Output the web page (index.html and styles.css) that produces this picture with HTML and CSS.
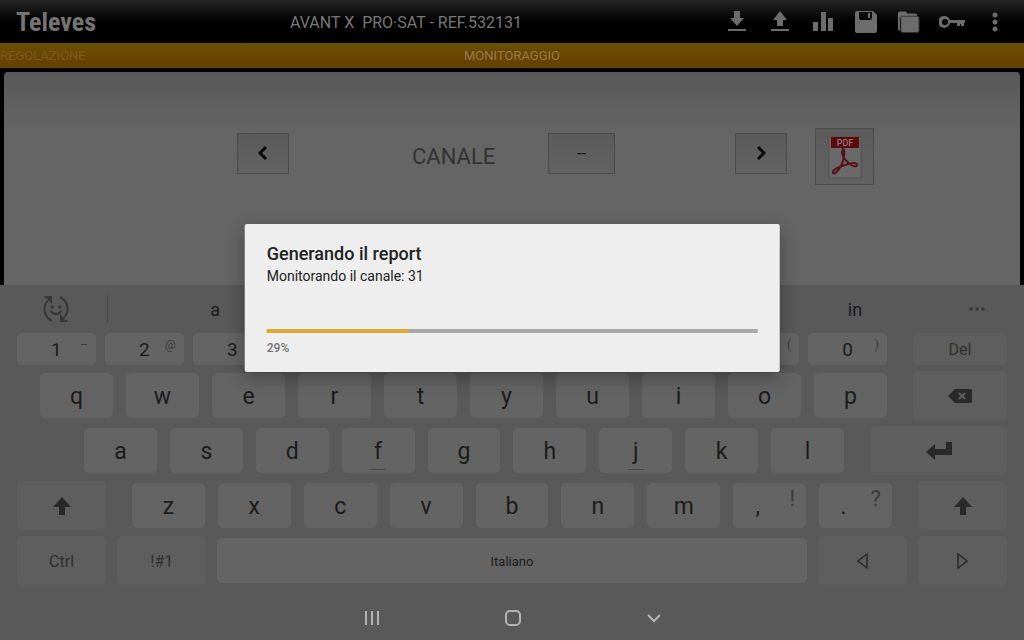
FILE: index.html
```html
<!DOCTYPE html>
<html lang="it">
<head>
<meta charset="utf-8">
<title>Televes - Monitoraggio</title>
<link rel="stylesheet" href="styles.css">
</head>
<body>
<div class="app">
  <header class="topbar">
    <div class="logo">Televes</div>
    <h1 class="device">AVANT X&nbsp; PRO·SAT - REF.532131</h1>
    <div class="actions">
      <button class="icon-btn" aria-label="Download"><svg width="18" height="22" viewBox="0 0 18 22"><path d="M6 0h6v7h4l-7 8-7-8h4zM0 18h18v2H0z"/></svg></button>
      <button class="icon-btn" aria-label="Upload"><svg width="18" height="22" viewBox="0 0 18 22"><path d="M6 15h6V9h4L9 0 2 9h4zM0 18h18v2H0z"/></svg></button>
      <button class="icon-btn" aria-label="Grafico"><svg width="20" height="22" viewBox="0 0 20 22"><path d="M0 11h5v9H0zM8 1h5v19H8zM15 7h5v13h-5z"/></svg></button>
      <button class="icon-btn" aria-label="Salva"><svg width="22" height="22" viewBox="0 0 22 22"><path fill-rule="evenodd" d="M2 0h16l4 4v16a2 2 0 0 1-2 2H2a2 2 0 0 1-2-2V2a2 2 0 0 1 2-2zM4 1v6q0 2 2 2h9q2 0 2-2V1zM13 2h2v5h-2z"/></svg></button>
      <button class="icon-btn" aria-label="Cartella"><svg width="23" height="22" viewBox="0 0 24 22"><path d="M1 18V2q0-2 2-2h6l2 2h8q2 0 2 2v2H3v14q-2 0-2-2z"/><path d="M4 6q0-1 1-1h16q2 0 2 2v13q0 2-2 2H6q-2 0-2-2z"/></svg></button>
      <button class="icon-btn" aria-label="Chiave"><svg width="26" height="22" viewBox="0 0 26 22"><path fill-rule="evenodd" d="M6 5a6 6 0 0 1 5 4h15v3h-1v3h-3v-2h-1v2h-3v-3h-7A6 6 0 1 1 6 5zM6 8a3 3 0 1 0 0 6 3 3 0 0 0 0-6z"/></svg></button>
      <button class="icon-btn" aria-label="Altro"><svg width="6" height="22" viewBox="0 0 6 22"><circle cx="3" cy="4" r="2.500"/><circle cx="3" cy="11" r="2.500"/><circle cx="3" cy="18" r="2.500"/></svg></button>
    </div>
  </header>

  <nav class="tabs">
    <a class="tab" href="#regolazione">REGOLAZIONE</a>
    <a class="tab active" href="#monitoraggio">MONITORAGGIO</a>
  </nav>

  <main class="stage">
    <section class="panel">
      <button class="box prev" aria-label="Canale precedente"><svg width="10" height="16" viewBox="0 0 10 16"><path d="M8 2 2 8l6 6"/></svg></button>
      <span class="label">CANALE</span>
      <button class="box value">--</button>
      <button class="box next" aria-label="Canale successivo"><svg width="10" height="16" viewBox="0 0 10 16"><path d="m2 2 6 6-6 6"/></svg></button>
      <button class="box pdf" aria-label="Report PDF">
        <svg width="34" height="44" viewBox="0 0 34 44">
          <rect class="sheet" x="1" y="2" width="32" height="41"/>
          <rect class="band" x="3" y="2" width="28" height="11"/>
          <text class="band-text" x="17" y="11" text-anchor="middle">PDF</text>
          <path class="swirl" d="M15 14c2 0 2 6-1 15-3 6-7 11-9 9-1-3 5-6 12-8 6-2 12-3 12 0 0 2-4 2-7-1-4-3-8-8-8-12z"/>
        </svg>
      </button>
    </section>
  </main>

  <section class="keyboard" aria-label="Tastiera">
    <div class="suggest">
      <button class="plain emoji" aria-label="Emoji">
        <svg width="28" height="28" viewBox="0 0 28 28"><path class="ring" d="M10 26C2 22 1 13 4 8l4-5M18 2c8 4 9 13 6 18l-4 5"/><path d="M2 1h8v8L8 7 7 4 3 3zM26 27h-8v-8l2 2 1 3 4 1z"/><path class="smile" d="M9 16c2 4 8 4 10 0"/><circle cx="10" cy="12" r="1.500"/><circle cx="18" cy="12" r="1.500"/></svg>
      </button>
      <button class="plain word">a</button>
      <button class="plain word last">in</button>
      <button class="plain more" aria-label="Altro"><svg width="16" height="4" viewBox="0 0 16 4"><circle cx="2" cy="2" r="1.700"/><circle cx="8" cy="2" r="1.700"/><circle cx="14" cy="2" r="1.700"/></svg></button>
    </div>

    <div class="row digits">
      <div class="keys"><button class="key">1<sup>–</sup></button><button class="key">2<sup>@</sup></button><button class="key">3</button><button class="key">4</button><button class="key">5</button><button class="key">6</button><button class="key">7</button><button class="key">8</button><button class="key">9<sup>(</sup></button><button class="key">0<sup>)</sup></button></div>
      <button class="fn">Del</button>
    </div>
    <div class="row top">
      <div class="keys"><button class="key">q</button><button class="key">w</button><button class="key">e</button><button class="key">r</button><button class="key">t</button><button class="key">y</button><button class="key">u</button><button class="key">i</button><button class="key">o</button><button class="key">p</button></div>
      <button class="fn" aria-label="Cancella"><svg width="24" height="16" viewBox="0 0 24 16"><path d="M7 1h15q2 0 2 2v10q0 2-2 2H7L0 8z"/><path class="cross" d="m11 5 6 6m0-6-6 6"/></svg></button>
    </div>
    <div class="row home">
      <div class="keys"><button class="key">a</button><button class="key">s</button><button class="key">d</button><button class="key bump">f</button><button class="key">g</button><button class="key">h</button><button class="key bump">j</button><button class="key">k</button><button class="key">l</button></div>
      <button class="fn" aria-label="Invio"><svg width="28" height="20" viewBox="0 0 28 20"><path d="m1 11 9-8v5h11V1h6v13H10v5z"/></svg></button>
    </div>
    <div class="row bottom">
      <button class="fn" aria-label="Maiuscole"><svg width="20" height="20" viewBox="0 0 20 20"><path d="m10 1 9 10h-6v8H7v-8H1z"/></svg></button>
      <div class="keys"><button class="key">z</button><button class="key">x</button><button class="key">c</button><button class="key">v</button><button class="key">b</button><button class="key">n</button><button class="key">m</button><button class="key punct">,<sup>!</sup></button><button class="key punct">.<sup>?</sup></button></div>
      <button class="fn" aria-label="Maiuscole"><svg width="20" height="20" viewBox="0 0 20 20"><path d="m10 1 9 10h-6v8H7v-8H1z"/></svg></button>
    </div>
    <div class="row space">
      <button class="fn">Ctrl</button>
      <button class="fn">!#1</button>
      <button class="key bar">Italiano</button>
      <button class="fn" aria-label="Sinistra"><svg class="arrow" width="12" height="18" viewBox="0 0 12 18"><path d="M11 2v14L2 9z"/></svg></button>
      <button class="fn" aria-label="Destra"><svg class="arrow" width="12" height="18" viewBox="0 0 12 18"><path d="M2 2v14l9-7z"/></svg></button>
    </div>

    <div class="system">
      <button class="plain" aria-label="Recenti"><svg width="16" height="16" viewBox="0 0 16 16"><path d="M2 1v14M8 1v14M14 1v14"/></svg></button>
      <button class="plain" aria-label="Home"><svg width="16" height="16" viewBox="0 0 16 16"><rect x="1" y="1" width="14" height="14" rx="4"/></svg></button>
      <button class="plain" aria-label="Nascondi tastiera"><svg width="16" height="16" viewBox="0 0 16 16"><path d="m2 5 6 6 6-6"/></svg></button>
    </div>
  </section>

  <div class="dialog" role="dialog" aria-labelledby="dialog-title">
    <h2 class="dialog-title" id="dialog-title">Generando il report</h2>
    <label class="dialog-text" for="scan">Monitorando il canale: 31</label>
    <progress class="progress" id="scan" max="100" value="29"></progress>
    <span class="percent">29%</span>
  </div>
</div>
</body>
</html>
```
FILE: styles.css
```css
* { box-sizing: border-box; }

body {
  margin: 0;
  background: #000;
  font-family: Roboto, "Liberation Sans", sans-serif;
}

button {
  margin: 0;
  padding: 0;
  border: 0;
  background: none;
  font: inherit;
  color: inherit;
}

svg { display: block; }

.app {
  position: relative;
  display: flex;
  flex-direction: column;
  min-height: 100vh;
}

.topbar {
  display: grid;
  grid-template-columns: 274px 1fr auto;
  align-items: center;
  height: 43px;
  padding: 0 8px 0 16px;
  background: linear-gradient(#262626, #000 50%);
  color: #747474;
}

.logo {
  font-family: "Roboto Condensed", "Liberation Sans Narrow", Roboto, sans-serif;
  font-size: 26px;
  font-weight: 700;
}

.device {
  margin: 0;
  padding-top: 2px;
  font-size: 16px;
  font-weight: 400;
  white-space: nowrap;
  color: #787878;
}

.actions {
  display: grid;
  grid-template-columns: repeat(7, 43px);
  place-items: center;
}

.icon-btn svg { fill: #6c6c6c; }
.icon-btn path + path { stroke: #333; }

.tabs {
  display: grid;
  grid-template-columns: 1fr auto 1fr;
  align-items: center;
  height: 25px;
  background: linear-gradient(#6b5005, #674400 60%, #644100);
  font-size: 13px;
}

.tab {
  color: #7c5a22;
  text-decoration: none;
}

.active { color: #94794a; }

.stage {
  display: flex;
  flex: 1;
  padding: 4px 4px 0;
}

.panel {
  display: grid;
  flex: 1;
  grid-template-columns: 233fr 52px 123fr 82px 54fr 67px 120fr 52px 28fr 59px 146fr;
  align-items: center;
  align-content: start;
  padding-top: 56px;
  border-radius: 4px 4px 0 0;
  background: linear-gradient(#585858, #656565 60px);
}

.box {
  display: grid;
  place-items: center;
  height: 41px;
  margin-bottom: 7px;
  border: 1px solid #4b4b4b;
  background: linear-gradient(#5b5b5b, #626262);
  color: #0c0c0c;
  font-size: 16px;
}

.prev svg, .next svg {
  fill: none;
  stroke: #080808;
  stroke-width: 3;
}

.prev { grid-column: 2; }
.label { grid-column: 4; font-size: 22px; color: #333; }
.value { grid-column: 6; }
.next { grid-column: 8; }
.pdf { grid-column: 10; height: 57px; margin: 0; }

.sheet { fill: #6a6a6a; stroke: #525252; }
.band { fill: #5c0a0e; }
.band-text { fill: #8d7475; font-size: 9px; font-weight: 500; }
.swirl { fill: none; stroke: #571218; stroke-width: 2; }

.keyboard {
  display: flex;
  flex-direction: column;
  gap: 6px;
  background: #595959;
  color: #1c1c1c;
}

.suggest {
  display: grid;
  grid-template-columns: 10.5% 21% 41.5% 21% 1fr;
  align-items: center;
  height: 48px;
  margin-bottom: -6px;
  font-size: 18px;
}

.suggest .plain { display: grid; place-items: center; height: 28px; }
.suggest .last { grid-column: 4; }
.emoji { padding-left: 5px; border-right: 1px solid #484848; }
.emoji svg { fill: #383838; }
.emoji .ring, .emoji .smile { fill: none; stroke: #383838; stroke-width: 2; }
.suggest .more { place-items: center start; padding-left: 6px; }
.more svg { fill: #383838; }

.row {
  display: flex;
  gap: 26px;
  height: 49px;
  padding: 0 17px;
}

.keys {
  display: grid;
  grid-auto-flow: column;
  grid-auto-columns: minmax(0, 1fr);
  gap: 13px;
  padding: 2px 0;
}

.key {
  position: relative;
  padding-top: 2px;
  border-radius: 5px;
  background: #646464;
  font-size: 23px;
}

.fn {
  display: grid;
  flex: 89 1 0;
  place-items: center;
  padding-top: 1px;
  border-radius: 5px;
  background: #5e5e5e;
  color: #303030;
  font-size: 16px;
}

.fn svg { fill: #292929; }

.digits { height: 32px; }
.digits .keys { flex: 870 1 0; gap: 9px; padding: 0; }
.digits .key { padding-top: 0; font-size: 19px; }
.digits .fn, .top .fn { flex-grow: 94; }

.top { padding-left: 40px; }
.top .keys { flex: 847 1 0; }
.fn .cross { fill: none; stroke: #5e5e5e; stroke-width: 2; }

.home { padding-left: 84px; }
.home .keys { flex: 760 1 0; }
.home .fn { flex-grow: 137; }

.bottom .keys { flex: 760 1 0; }

.key sup {
  position: absolute;
  top: 5px;
  right: 8px;
  font-size: 12px;
  line-height: 14px;
  color: #3c3c3c;
}

.key.punct { padding-right: 24px; }
.key.punct sup { right: 11px; font-size: 22px; line-height: 22px; }

.bump::after {
  content: "";
  position: absolute;
  bottom: 3px;
  left: 50%;
  width: 16px;
  height: 1px;
  margin-left: -8px;
  background: #484848;
}

.space { gap: 11px; }
.space .bar { flex: 588 1 0; margin: 2px 0; font-size: 13px; }
.fn .arrow { fill: none; stroke: #2a2a2a; stroke-width: 1.500; }

.system {
  display: grid;
  grid-template-columns: repeat(3, 141px);
  justify-content: center;
  place-items: center;
  height: 49px;
  padding: 4px 0 0 2px;
}

.system svg { fill: none; stroke: #b4b4b4; stroke-width: 2; }

.dialog {
  position: absolute;
  top: 224px;
  left: 50%;
  display: flex;
  flex-direction: column;
  width: 52.2%;
  padding: 19px 22px 16px;
  transform: translateX(-50%);
  border-radius: 2px;
  background: #eee;
  box-shadow: 0 6px 18px rgba(0, 0, 0, 0.3);
  color: #212121;
}

.dialog-title {
  margin: 0;
  font-size: 18px;
  font-weight: 500;
  line-height: 22px;
}

.dialog-text { font-size: 14px; line-height: 22px; }

.progress {
  width: 100%;
  height: 4px;
  margin: 42px 0 8px;
  border: 0;
  appearance: none;
  background: #a8a8a8;
}

.progress::-webkit-progress-bar { background: #a8a8a8; }
.progress::-webkit-progress-value { background: #e3a735; }

.percent {
  font-size: 12px;
  font-weight: 500;
  line-height: 15px;
  color: #737373;
}
```
